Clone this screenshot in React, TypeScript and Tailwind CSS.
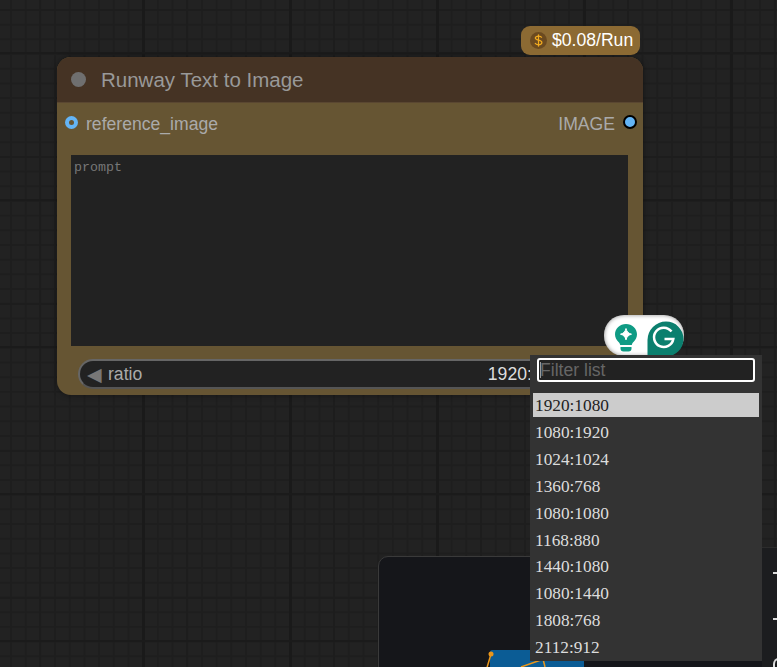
const ratios = [
  "1920:1080",
  "1080:1920",
  "1024:1024",
  "1360:768",
  "1080:1080",
  "1168:880",
  "1440:1080",
  "1080:1440",
  "1808:768",
  "2112:912",
];

const RunwayNode: React.FC = () => {
  return (
    <div className="absolute left-[57px] top-[57px] flex h-[338px] w-[586px] flex-col rounded-[14px] bg-[#665533] shadow-[0_0_6px_#00000066]">
      {/* Title */}
      <div className="flex h-[46px] items-center rounded-t-[14px] border-b border-[#5a4731] bg-[#453324] pl-[14px]">
        <div className="h-[15px] w-[15px] rounded-full bg-[#6f6f6f]" />
        <span className="ml-[15px] pt-[1px] text-[20.5px] text-[#999999]">Runway Text to Image</span>
      </div>

      {/* Slots */}
      <div className="flex h-[39px] items-center justify-between pl-[8px] pr-[6px]">
        <div className="flex items-center">
          <div className="flex h-[13px] w-[13px] items-center justify-center rounded-full bg-[#64b5f6]">
            <div className="h-[5px] w-[5px] rounded-full bg-[#665533]" />
          </div>
          <span className="ml-[8px] pt-[3px] text-[17.6px] text-[#aaaaaa]">reference_image</span>
        </div>
        <div className="flex items-center">
          <span className="mr-[8px] pt-[3px] text-[17.6px] text-[#aaaaaa]">IMAGE</span>
          <div className="h-[14px] w-[14px] rounded-full border-2 border-black bg-[#64b5f6]" />
        </div>
      </div>

      {/* Prompt */}
      <div className="ml-[14px] mt-[13px] h-[191px] w-[557px] bg-[#222222] px-[3px] py-[5px] font-['Liberation_Mono',monospace] text-[13.3px] leading-[16px] text-[#777777]">
        prompt
      </div>

      {/* Ratio widget */}
      <div className="ml-[21px] mt-[13px] flex h-[30px] w-[544px] items-center rounded-full border-2 border-[#666666] border-b-[#555555] bg-[#222222] pl-[7px] pr-[49px] text-[17.6px]">
        <span className="text-[19px] leading-none text-[#777777]">◀</span>
        <span className="ml-[6px] text-[#aaaaaa]">ratio</span>
        <span className="ml-auto text-[#dddddd]">1920:1080</span>
      </div>
    </div>
  );
};

const CostBadge: React.FC = () => {
  return (
    <div className="absolute left-[521px] top-[26px] flex h-[29px] w-[119px] items-center rounded-[9px] bg-[#8c6a33] pl-[9px]">
      <div className="flex h-[17px] w-[17px] items-center justify-center rounded-full bg-[#6b4a20]">
        <svg width="11" height="13" viewBox="0 0 11 13" fill="none" stroke="#f2ab1f" strokeWidth="1.2">
          <path d="M8.8 3.6c-.5-.9-1.600-1.500-3.300-1.500-1.900 0-3.200.8-3.200 2 0 2.800 6.600 1.300 6.600 4.500 0 1.300-1.400 2.200-3.400 2.200-1.800 0-3-.7-3.500-1.700" />
          <path d="M5.500 .4v12.200" />
        </svg>
      </div>
      <span className="ml-[5px] text-[17.6px] text-white">$0.08/Run</span>
    </div>
  );
};

const GrammarlyWidget: React.FC = () => {
  return (
    <div className="absolute left-[604px] top-[315px] flex h-[41px] w-[80px] items-start rounded-[20px] bg-white pl-[11px] shadow-[inset_0_0_4px_#00000077]">
      <svg className="mt-[9px] shrink-0" width="22" height="28" viewBox="0 0 22 28">
        <path
          d="M11 0C5 0 0 4.600 0 10.300c0 3.300 1.500 5.700 3.300 7.400 1.100 1.100 1.700 2 1.900 3.300h11.600c.2-1.300.8-2.200 1.900-3.300 1.800-1.700 3.300-4.100 3.300-7.400C22 4.600 17 0 11 0Z"
          fill="#0f9b84"
        />
        <path d="M11 4.500c.9 3.400 2.200 4.700 5.500 5.700-3.300 1-4.600 2.300-5.500 5.700-.9-3.400-2.200-4.700-5.500-5.700 3.300-1 4.600-2.300 5.500-5.700Z" fill="#ffffff" stroke="#ffffff" strokeLinejoin="round" />
        <path d="M5.500 23h11v1.500a3 3 0 0 1-3 3h-5a3 3 0 0 1-3-3Z" fill="#0f9b84" />
      </svg>
      <svg className="ml-[10px] mt-[6px] shrink-0" width="37" height="35" viewBox="0 0 37 35">
        <path d="M19 .5a17.500 17.500 0 0 1 0 35H2.500A2 2 0 0 1 .5 33.500V19A18.500 18.500 0 0 1 19 .5Z" fill="#0b7f6e" />
        <path d="M24.500 10.500A9.700 9.700 0 1 0 26.300 18H17.500" fill="none" stroke="#ffffff" strokeWidth="2.500" />
      </svg>
    </div>
  );
};

const FilterMenu: React.FC = () => {
  return (
    <div className="absolute left-[530px] top-[355px] h-[306px] w-[232px] bg-[#333333] px-[3px] pt-[3px]">
      <div className="relative ml-[4px] mr-[4px] flex h-[24px] items-center rounded-[3px] border-2 border-white bg-[#222222] pl-[1px] text-[17.6px] text-[#666666]">
        Filter list
        <div className="absolute left-[1px] top-[2px] h-[16px] w-px bg-[#999999]" />
      </div>
      <ul className="mt-[11px] font-['Liberation_Serif',serif] text-[17.3px]">
        {ratios.map((ratio, index) => (
          <li
            key={ratio}
            className={
              index === 0
                ? "flex h-[24px] items-center bg-[#cccccc] pl-[2px] pt-[1px] text-[#222222]"
                : "flex h-[26.9px] items-center pl-[2px] pt-[5px] text-[#dddddd]"
            }
          >
            {ratio}
          </li>
        ))}
      </ul>
    </div>
  );
};

const BottomNodes: React.FC = () => {
  return (
    <>
      <div className="absolute left-[378px] top-[556px] h-[130px] w-[385px] overflow-hidden rounded-[10px] border border-[#3a3a3a] bg-[#15161a]">
        <svg className="absolute left-[104px] top-[90px]" width="110" height="30" viewBox="0 0 110 30">
          <rect x="7" y="3" width="94" height="30" rx="2" fill="#0b5c95" />
          <path d="M8 7 3 24M38 20l40-14M60 12l2 8" stroke="#e8961c" strokeWidth="1.500" fill="none" />
          <circle cx="8" cy="7" r="2.500" fill="#e8961c" />
        </svg>
      </div>
      <div className="absolute left-[762px] top-[547px] flex h-[130px] w-[30px] flex-col items-start border-t border-[#2c2c2c] bg-[#1c1d1f] pl-[11px] text-[#dddddd]">
        <div className="mt-[24px] h-[2px] w-[5px] bg-[#dddddd]" />
        <div className="mt-[44px] h-[2px] w-[5px] bg-[#dddddd]" />
        <div className="mt-[38px] h-[10px] w-[8px] rounded-tl-[6px] border-l-2 border-t-2 border-[#dddddd]" />
      </div>
    </>
  );
};

const App: React.FC = () => {
  return (
    <div className="relative h-[667px] w-[777px] overflow-hidden bg-[#222222] bg-[linear-gradient(#1b1b1b_2px,transparent_2px),linear-gradient(90deg,#1a1a1a_3px,transparent_3px),linear-gradient(#1d1d1d_2px,transparent_2px),linear-gradient(90deg,#1d1d1d_2px,transparent_2px),linear-gradient(#1e1e1e_1.500px,transparent_1.500px),linear-gradient(90deg,#1e1e1e_1.500px,transparent_1.500px)] bg-[size:147px_147px,147px_147px,147px_147px,147px_147px,14.700px_14.700px,14.700px_14.700px] bg-[position:0_52px,142px_0,0_9px,39px_0,0_9px,10px_0] font-['Liberation_Sans',sans-serif]">
      <BottomNodes />
      <RunwayNode />
      <CostBadge />
      <GrammarlyWidget />
      <FilterMenu />
    </div>
  );
};

export default App;
